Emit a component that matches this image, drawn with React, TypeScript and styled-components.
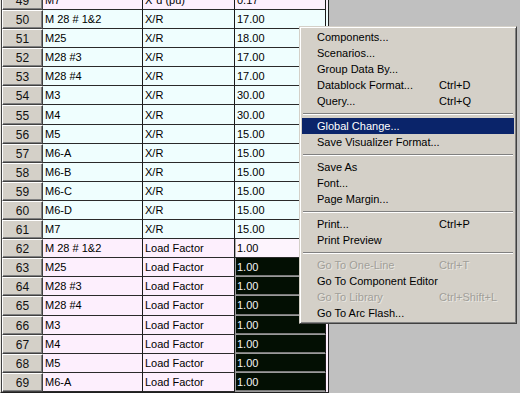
import React from "react";
import styled, { createGlobalStyle } from "styled-components";

const Global = createGlobalStyle`
  html, body { margin: 0; padding: 0; background: #c0c0c0; overflow: hidden; }
  #root { width: 520px; height: 393px; }
`;

const Screen = styled.div`
  position: relative;
  width: 520px;
  height: 393px;
  overflow: hidden;
  background: #c0c0c0;
  font-family: "Liberation Sans", Arial, sans-serif;
`;

const Sheet = styled.div`
  display: flex;
  flex-direction: column;
  width: 326px;
  margin-top: -9.1px;
  border-left: 1px solid #e8e6e0;
  border-right: 1px solid #202020;
  border-bottom: 1px solid #202020;
  box-shadow: inset 1px 0 0 #404040;
  padding-left: 1px;
  background: #d4d0c8;
`;

type Tone = "pink" | "cyan";

const Row = styled.div<{ $tone: Tone }>`
  display: grid;
  grid-template-columns: 41px 100px 92px 91px;
  height: 19.1px;
  background: ${(p) => (p.$tone === "pink" ? "#fdeffd" : "#effefe")};
`;

const Head = styled.div`
  box-sizing: border-box;
  background: #d4d0c8;
  border-top: 1px solid #ffffff;
  border-left: 1px solid #ffffff;
  border-right: 1px solid #404040;
  border-bottom: 1px solid #404040;
  box-shadow: inset -1px -1px 0 #808080;
  display: flex;
  align-items: center;
  justify-content: center;
  font-size: 12px;
  color: #111;
  padding-top: 1px;
`;

const Cell = styled.div<{ $state?: "plain" | "edit" | "selected" }>`
  box-sizing: border-box;
  border-right: 1px solid #1a1a1a;
  border-bottom: 1px solid #2a2a2a;
  display: flex;
  align-items: center;
  padding-left: 2px;
  font-size: 11px;
  white-space: nowrap;
  overflow: hidden;
  color: ${(p) => (p.$state === "selected" ? "#f4f4f4" : "#000")};
  background: ${(p) =>
    p.$state === "selected" ? "#030f03" : p.$state === "edit" ? "#fdf4fd" : "transparent"};
  ${(p) =>
    p.$state === "selected"
      ? "box-shadow: inset 1px 0 0 #9a9a9a, inset 0 -1px 0 #7a7a7a; border-bottom-color: #9a9a9a;"
      : p.$state === "edit"
      ? "box-shadow: inset 1px 0 0 #b0b0b0;"
      : ""}
`;

const Menu = styled.div`
  position: absolute;
  left: 299px;
  top: 26px;
  width: 218px;
  box-sizing: border-box;
  background: #d4d0c8;
  border-top: 1px solid #d4d0c8;
  border-left: 1px solid #d4d0c8;
  border-right: 1px solid #404040;
  border-bottom: 1px solid #404040;
  box-shadow: inset 1px 1px 0 #ffffff, inset -1px -1px 0 #808080;
  padding: 2px 2px 2px 2px;
  display: flex;
  flex-direction: column;
  font-family: "Liberation Sans", Tahoma, sans-serif;
  font-size: 11px;
`;

const Item = styled.div<{ $active?: boolean; $disabled?: boolean }>`
  display: grid;
  grid-template-columns: 122px 1fr;
  align-items: center;
  height: 16px;
  padding-left: 15px;
  background: ${(p) => (p.$active ? "#0a246a" : "transparent")};
  color: ${(p) => (p.$active ? "#ffffff" : p.$disabled ? "#a19f99" : "#000")};
  ${(p) => (p.$disabled ? "text-shadow: 1px 1px 0 #e9e7e2;" : "")}
  white-space: nowrap;
`;

const Shortcut = styled.span``;

const Sep = styled.div`
  height: 9px;
  display: flex;
  align-items: center;
  padding: 0 1px;
  &::after {
    content: "";
    flex: 1;
    height: 0;
    border-top: 1px solid #808080;
    border-bottom: 1px solid #ffffff;
  }
`;

type RowData = { n: number; name: string; type: string; value: string; tone: Tone; state?: "plain" | "edit" | "selected" };

const rows: RowData[] = [
  { n: 49, name: "M7", type: "X\"d (pu)", value: "0.17", tone: "pink" },
  { n: 50, name: "M 28 # 1&2", type: "X/R", value: "17.00", tone: "cyan" },
  { n: 51, name: "M25", type: "X/R", value: "18.00", tone: "cyan" },
  { n: 52, name: "M28 #3", type: "X/R", value: "17.00", tone: "cyan" },
  { n: 53, name: "M28 #4", type: "X/R", value: "17.00", tone: "cyan" },
  { n: 54, name: "M3", type: "X/R", value: "30.00", tone: "cyan" },
  { n: 55, name: "M4", type: "X/R", value: "30.00", tone: "cyan" },
  { n: 56, name: "M5", type: "X/R", value: "15.00", tone: "cyan" },
  { n: 57, name: "M6-A", type: "X/R", value: "15.00", tone: "cyan" },
  { n: 58, name: "M6-B", type: "X/R", value: "15.00", tone: "cyan" },
  { n: 59, name: "M6-C", type: "X/R", value: "15.00", tone: "cyan" },
  { n: 60, name: "M6-D", type: "X/R", value: "15.00", tone: "cyan" },
  { n: 61, name: "M7", type: "X/R", value: "15.00", tone: "cyan" },
  { n: 62, name: "M 28 # 1&2", type: "Load Factor", value: "1.00", tone: "pink", state: "edit" },
  { n: 63, name: "M25", type: "Load Factor", value: "1.00", tone: "pink", state: "selected" },
  { n: 64, name: "M28 #3", type: "Load Factor", value: "1.00", tone: "pink", state: "selected" },
  { n: 65, name: "M28 #4", type: "Load Factor", value: "1.00", tone: "pink", state: "selected" },
  { n: 66, name: "M3", type: "Load Factor", value: "1.00", tone: "pink", state: "selected" },
  { n: 67, name: "M4", type: "Load Factor", value: "1.00", tone: "pink", state: "selected" },
  { n: 68, name: "M5", type: "Load Factor", value: "1.00", tone: "pink", state: "selected" },
  { n: 69, name: "M6-A", type: "Load Factor", value: "1.00", tone: "pink", state: "selected" },
];

type MenuEntry = { label: string; key?: string; active?: boolean; disabled?: boolean } | "sep";

const menu: MenuEntry[] = [
  { label: "Components..." },
  { label: "Scenarios..." },
  { label: "Group Data By..." },
  { label: "Datablock Format...", key: "Ctrl+D" },
  { label: "Query...", key: "Ctrl+Q" },
  "sep",
  { label: "Global Change...", active: true },
  { label: "Save Visualizer Format..." },
  "sep",
  { label: "Save As" },
  { label: "Font..." },
  { label: "Page Margin..." },
  "sep",
  { label: "Print...", key: "Ctrl+P" },
  { label: "Print Preview" },
  "sep",
  { label: "Go To One-Line", key: "Ctrl+T", disabled: true },
  { label: "Go To Component Editor" },
  { label: "Go To Library", key: "Ctrl+Shift+L", disabled: true },
  { label: "Go To Arc Flash..." },
];

export default function App() {
  return (
    <Screen>
      <Global />
      <Sheet>
        {rows.map((r) => (
          <Row key={r.n} $tone={r.tone}>
            <Head>{r.n}</Head>
            <Cell>{r.name}</Cell>
            <Cell>{r.type}</Cell>
            <Cell $state={r.state}>{r.value}</Cell>
          </Row>
        ))}
      </Sheet>
      <Menu>
        {menu.map((m, i) =>
          m === "sep" ? (
            <Sep key={i} />
          ) : (
            <Item key={i} $active={m.active} $disabled={m.disabled}>
              <span>{m.label}</span>
              <Shortcut>{m.key ?? ""}</Shortcut>
            </Item>
          )
        )}
      </Menu>
    </Screen>
  );
}
